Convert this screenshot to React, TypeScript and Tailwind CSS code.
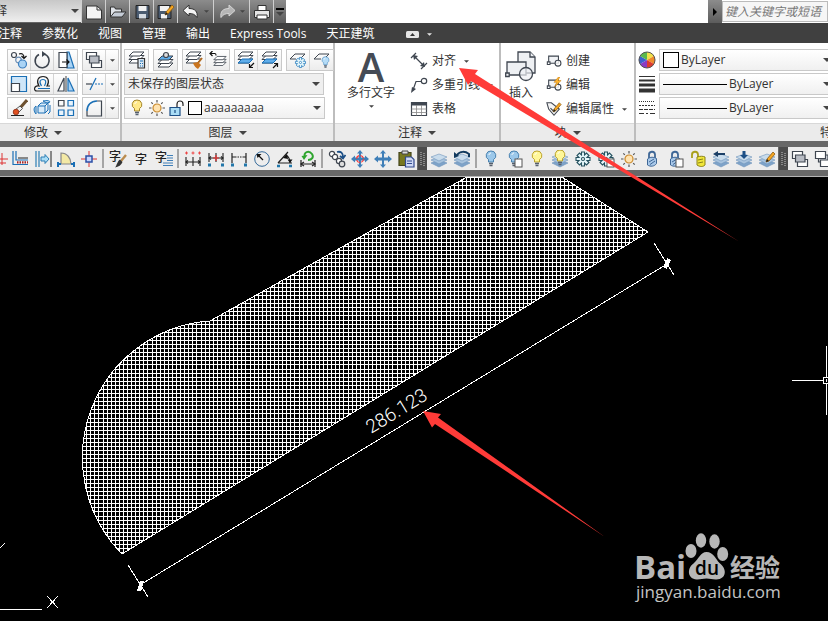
import React, { useState } from "react";

const DARK = "#3f4650";
const BLUE = "#1a6fb5";
const SKY = "#a9d3f5";

type IconProps = { children: React.ReactNode; size?: string };

const Icon = ({ children, size = "w-[18px] h-[18px]" }: IconProps) => (
  <svg
    viewBox="0 0 18 18"
    className={`${size} shrink-0`}
    fill="none"
    stroke={DARK}
    strokeWidth="1.2"
    aria-hidden="true"
  >
    {children}
  </svg>
);

const Caret = ({ small = false, light = false }) => (
  <svg
    viewBox="0 0 8 4"
    className={small ? "w-[5px] h-[3px] shrink-0" : "w-2 h-1 shrink-0"}
    aria-hidden="true"
  >
    <path d="M0 0h8L4 4z" fill={light ? "#e5e5e5" : "#444"} />
  </svg>
);

/* ---------- shared icon parts ---------- */

const Layers = ({ top = "#fff", y = 0 }) => (
  <g transform={`translate(0 ${y})`} strokeWidth="1">
    <path d="M1 14l4-4h11l-4 4z" fill="#fff" />
    <path d="M1 10.500l4-4h11l-4 4z" fill="#fff" />
    <path d="M1 7l4-4h11l-4 4z" fill={top} />
  </g>
);

const Stack = () => (
  <g strokeWidth=".6" stroke="#6f93ba">
    <path d="M1 13l8-3 8 3-8 4z" fill="#7ea3c9" />
    <path d="M1 10l8-3 8 3-8 4z" fill="#a9c4de" />
    <path d="M1 7l8-3 8 3-8 4z" fill="#c9dcec" />
  </g>
);

const Bulb = ({ fill = "#ffe98a", stroke = "#9a7a1e" }) => (
  <g>
    <path d="M9 1a4.600 4.600 0 0 0-2.500 8.600V12h5V9.600A4.600 4.600 0 0 0 9 1z" fill={fill} stroke={stroke} strokeWidth=".9" />
    <path d="M7 13.500h4M7.500 15.500h3" stroke="#56606e" strokeWidth="1.500" />
    <path d="M7 5c0-1 1-2 2-2" stroke="#fff" strokeWidth="1" />
  </g>
);

const Sun = () => (
  <g stroke="#555" strokeWidth="1.200">
    <circle cx="9" cy="9" r="4" fill="#ffe3b0" stroke="#c98a2e" />
    <path d="M9 1v2.500M9 14.500V17M1 9h2.500M14.500 9H17M3.300 3.300l1.500 1.500M13.200 13.200l1.500 1.500M3.300 14.700l1.500-1.500M13.200 4.800l1.500-1.500" />
  </g>
);

const Flake = ({ color = "#2b7fc0" }) => (
  <g stroke={color} strokeWidth="1.100" fill="#e6f7fb">
    <path d="M7.500 2h3v3l2-2 2.500 2.500-2 2h3v3h-3l2 2-2.500 2.500-2-2v3h-3v-3l-2 2L3 12.500l2-2H2v-3h3l-2-2L5.500 3l2 2z" />
    <circle cx="9" cy="9" r="1.500" fill="#fff" />
  </g>
);

const Lock = () => (
  <g stroke="#3f6796" strokeWidth="1">
    <path d="M6 9V5a3 3 0 0 1 6-.5V9" strokeWidth="1.800" />
    <path d="M4.500 9c3-2.500 6-2 9-.5v5c-2 3-6 3.500-9 1.500z" fill="#a9c9ea" />
    <path d="M6 12l5-3M7 14.500l5-3.500" stroke="#3f6796" />
  </g>
);

const Shadow = ({ x = 10, y = 9 }) => (
  <rect x={x} y={y} width="7" height="8" fill="#fff" stroke="#555" strokeWidth="1" />
);

const Pencil = () => (
  <g strokeWidth=".8">
    <path d="M8 12l1-3 6-7 2 2-6 7z" fill="#f5a623" stroke="#8a5a10" />
    <path d="M8 12l1-3 2 2z" fill="#222" stroke="none" />
  </g>
);

const Brush = () => (
  <g>
    <path d="M17 5l-5 6" stroke="#b98b4e" strokeWidth="2.400" />
    <path d="M11 9.500l2.500 2.500c-1 3-4 5-7.500 5.500 2-2 2-6 5-8z" fill="#333" stroke="none" />
  </g>
);

const Spans = ({ y = 11 }) => (
  <g stroke="#222" strokeWidth="1.100">
    <path d={`M2 ${y - 5}v9M9 ${y - 5}v9M16 ${y - 5}v9M2 ${y}h14`} />
    <path d={`M4 ${y - 1.5}L2 ${y}l2 1.500M14 ${y - 1.5}l2 1.500-2 1.500`} />
  </g>
);

const BlockShape = () => (
  <g strokeWidth="1.200">
    <path d="M3 3.500h11v8H3z" fill="#f1f3f6" />
    <circle cx="13.500" cy="11.500" r="3.300" fill="#fff" fillOpacity=".8" />
    <path d="M1.500 10h3v3h-3z" fill="#fff" />
  </g>
);

const Compass = ({ accent = "" }) => (
  <g fill="#3f7fb8" stroke="none">
    <path d="M9 0l3 3.500h-2v4h4V5.500L18 9l-4 3.500v-2h-4v4h2L9 18l-3-3.500h2v-4H4v2L0 9l4-3.500v2h4v-4H6z" />
    {accent && <circle cx="9" cy="9" r="3.500" fill="none" stroke={accent} strokeWidth="1.200" strokeDasharray="4 1.500" />}
  </g>
);

const Glyph = ({ x = 9, y = 14 }) => (
  <text
    x={x}
    y={y}
    textAnchor="middle"
    fontSize="12"
    fontWeight="500"
    fill="#222"
    stroke="none"
    fontFamily="'Noto Sans CJK SC', sans-serif"
  >
    字
  </text>
);

/* ---------- ribbon building blocks ---------- */

type Tool = { label: string; icon: React.ReactNode };

const toolBox = "flex h-[22px] border border-[#c9c9c9] bg-linear-to-b from-white to-[#ececec]";

const ToolGroup = ({ tools, drop = false }: { tools: Tool[]; drop?: boolean }) => (
  <div className={toolBox}>
    {tools.map((t) => (
      <button
        key={t.label}
        aria-label={t.label}
        className="flex w-[23px] items-center justify-center border-r border-[#d4d4d4] last:border-r-0"
      >
        {t.icon}
      </button>
    ))}
    {drop && (
      <button aria-label="更多" className="flex w-3 items-center justify-center">
        <Caret small />
      </button>
    )}
  </div>
);

type PanelProps = {
  title: string;
  className: string;
  footer?: string;
  children: React.ReactNode;
};

const Panel = ({ title, className, footer = "justify-center", children }: PanelProps) => (
  <section className={`flex shrink-0 flex-col border-r-2 border-[#bdbdbd] ${className}`}>
    <div className="flex-1 pt-1.5">{children}</div>
    <button
      className={`flex h-[18px] items-center gap-1.5 border-t border-[#d8d8d8] bg-[#ebebeb] ${footer}`}
    >
      {title}
      <Caret />
    </button>
  </section>
);

type DropProps = {
  label: string;
  value: string;
  width: string;
  lead?: React.ReactNode;
  bg?: string;
};

const Drop = ({ label, value, width, lead, bg = "bg-linear-to-b from-white to-[#f0f0f0]" }: DropProps) => (
  <div className={`flex h-[22px] items-center gap-0.5 border border-[#c9c9c9] px-[3px] ${width} ${bg}`}>
    {lead}
    <select aria-label={label} className="min-w-0 flex-1 appearance-none bg-transparent outline-none">
      <option>{value}</option>
    </select>
    <Caret />
  </div>
);

const Row = ({ icon, text, drop = false }: { icon: React.ReactNode; text: string; drop?: boolean }) => (
  <button className="flex h-6 items-center gap-1 whitespace-nowrap">
    {icon}
    {text}
    {drop && (
      <span className="pl-1">
        <Caret small />
      </span>
    )}
  </button>
);

/* ---------- ribbon data ---------- */

const modifyRows: Tool[][] = [
  [
    {
      label: "复制",
      icon: (
        <Icon>
          <circle cx="4" cy="4" r="2.500" />
          <circle cx="8.500" cy="9" r="2.800" stroke="#6d8fb5" />
          <circle cx="12.500" cy="13" r="4" fill={SKY} stroke="#3d7fbf" />
          <path d="M9 3c3-1 5 0 5 4M11.500 5l2.500 2.500L16.500 5" stroke="#111" />
        </Icon>
      ),
    },
    {
      label: "旋转",
      icon: (
        <Icon>
          <path d="M6 3.500A7 7 0 1 0 11 3" strokeWidth="1.600" />
          <path d="M9 0l4 3-4 3z" fill={DARK} stroke="none" />
        </Icon>
      ),
    },
    {
      label: "拉伸",
      icon: (
        <Icon>
          <path d="M10 1h2l5 16h-7z" fill={SKY} stroke={BLUE} />
          <path d="M2 1.500h8v15H2z" fill="#fff" />
          <path d="M5 11h7M9.500 8.500L12 11l-2.500 2.500" stroke="#111" />
        </Icon>
      ),
    },
  ],
  [
    {
      label: "缩放",
      icon: (
        <Icon>
          <path d="M1.500 1.500h15v15h-15z" fill="#cfe6f8" stroke={BLUE} />
          <path d="M1.500 8.500h8v8h-8z" fill="#fff" />
        </Icon>
      ),
    },
    {
      label: "偏移",
      icon: (
        <Icon>
          <path d="M17 11h-3c3-5 1-9.500-4-9.500S3 6 6 11c-5-1-6 5-2 5h13" stroke="#222" />
          <path d="M17 13.500H5M8.500 11c-3-5-1-6.500 1.500-6.500s4 2 1.500 6.500" stroke={BLUE} />
        </Icon>
      ),
    },
    {
      label: "镜像",
      icon: (
        <Icon>
          <path d="M7 3v13H1z" fill="#fff" />
          <path d="M11 3v13h6z" fill={SKY} stroke={BLUE} />
          <path d="M9 1v16" stroke="#444" strokeWidth="1" />
        </Icon>
      ),
    },
  ],
  [
    {
      label: "删除",
      icon: (
        <Icon>
          <path d="M17 1l-7 8" stroke="#6d5130" strokeWidth="3" />
          <path d="M10 7l2.500 2.500-4 4-3-3z" fill="#eee" stroke="#333" strokeWidth=".8" />
          <circle cx="6" cy="13" r="2.800" fill="#e05020" stroke="#8a2a10" strokeWidth=".8" />
          <path d="M1 16.500h13" stroke="#222" strokeWidth="1" />
        </Icon>
      ),
    },
    {
      label: "分解",
      icon: (
        <Icon>
          <g stroke={BLUE} strokeWidth="1" fill="#d9ebf9">
            <path d="M5 7h7v7H5zM5 7l3-3h7l-3 3M12 14l3-3V4" />
            <path d="M3 7c-3 2-2 6 0 8V7zM10 2c4-1 7 0 7 1l-3 1zM17 6v7l-2 2" />
          </g>
        </Icon>
      ),
    },
    {
      label: "阵列",
      icon: (
        <Icon>
          <path d="M1.500 1.500H7V7H1.500z" />
          <path d="M11 1.500h5.500V7H11zM1.500 11H7v5.500H1.500zM11 11h5.500v5.500H11z" stroke={BLUE} fill="#eaf4fc" />
        </Icon>
      ),
    },
  ],
];

const modifyDrops: Tool[] = [
  {
    label: "前置",
    icon: (
      <Icon>
        <path d="M1.500 1.500h10v7h-10z" fill="#fff" />
        <path d="M6.500 9.500h10v7h-10z" fill="#fff" />
        <path d="M4.500 5H14v7H4.500z" fill="#b8bcc4" />
      </Icon>
    ),
  },
  {
    label: "修剪",
    icon: (
      <Icon>
        <path d="M1 9h6" stroke={DARK} />
        <path d="M10 9h8" stroke={BLUE} strokeDasharray="2 1" />
        <path d="M5 15l6-12" stroke={BLUE} />
      </Icon>
    ),
  },
  {
    label: "圆角",
    icon: (
      <Icon>
        <path d="M2 12v5h14.500V2H12" />
        <path d="M2 12C2 6 6 2 12 2" stroke={BLUE} strokeWidth="1.600" />
      </Icon>
    ),
  },
];

const layerGroups: Tool[][] = [
  [
    {
      label: "图层特性",
      icon: (
        <Icon>
          <Layers y={-2} />
          <path d="M10 7.500h6.500V17H10z" fill="#dbe8f3" stroke="#333" />
          <path d="M12 10h3M12 12.500h1M14 12.500h1M12 15h1M14 15h1" stroke={BLUE} />
        </Icon>
      ),
    },
  ],
  [
    {
      label: "置为当前",
      icon: (
        <Icon>
          <Layers top="#5fadea" y={2} />
          <circle cx="9" cy="4" r="2.500" fill="#ddd" />
        </Icon>
      ),
    },
  ],
  [
    {
      label: "匹配",
      icon: (
        <Icon>
          <Layers y={-2} />
          <path d="M17 7l-4 5" stroke="#b06a20" strokeWidth="2" />
          <path d="M8 12l5-1 3 3-3 4c-2-1-4-3-5-6z" fill="#c9741e" stroke="none" />
        </Icon>
      ),
    },
    {
      label: "上一个",
      icon: (
        <Icon>
          <g transform="translate(4 3) scale(.82)">
            <Layers />
          </g>
          <path d="M1 2.500h5c1 0 1 1 1 2M3.500 0L1 2.500 3.500 5" stroke="#111" />
        </Icon>
      ),
    },
  ],
  [
    {
      label: "隔离",
      icon: (
        <Icon>
          <Layers y={-2} />
          <path d="M1 12l4-4h11l-4 4z" fill="#5fadea" stroke={BLUE} strokeWidth="1" />
          <path d="M17 12l-4 4M12.500 13v3.500H16" stroke="#111" />
        </Icon>
      ),
    },
    {
      label: "取消隔离",
      icon: (
        <Icon>
          <Layers y={-2} />
          <path d="M1 12l4-4h11l-4 4z" fill="#5fadea" stroke={BLUE} strokeWidth="1" />
          <path d="M12 17l4-4M13 12.500h3.500V16" stroke="#111" />
        </Icon>
      ),
    },
  ],
  [
    {
      label: "冻结",
      icon: (
        <Icon>
          <path d="M7 8H1l5-5h10l-4 4" strokeWidth="1" />
          <g transform="translate(5 5) scale(.72)">
            <Flake />
          </g>
        </Icon>
      ),
    },
    {
      label: "关闭",
      icon: (
        <Icon>
          <path d="M8 8H1l5-5h10l-4 4" strokeWidth="1" />
          <g transform="translate(6 5) scale(.72)">
            <Bulb fill="#b5dcf7" stroke="#4f8fc4" />
          </g>
        </Icon>
      ),
    },
  ],
];

/* ---------- tool strip data ---------- */

const stripA: Tool[][] = [
  [
    {
      label: "墙体",
      icon: (
        <Icon>
          <path d="M5 1v9h12M2 1v13.500h15" stroke={BLUE} />
          <path d="M7 8h10" stroke="#222" strokeWidth="1" />
          <path d="M6 12.300h11" stroke="#a22" strokeWidth="2.200" strokeDasharray="1.500 1" />
        </Icon>
      ),
    },
    {
      label: "偏移墙",
      icon: (
        <Icon>
          <path d="M2 1v16M5 1v16" stroke="#2d7fb5" />
          <path d="M7 7h4V4.500L15 9l-4 4.500V11H7z" fill="#a9dcf5" stroke="#2d7fb5" strokeWidth="1" />
          <path d="M17 1v16" stroke="#222" strokeWidth="1" />
        </Icon>
      ),
    },
    {
      label: "门窗",
      icon: (
        <Icon>
          <path d="M4 14V3c6 0 10 5 10 11z" fill="#f3e9a5" stroke="#888" />
          <path d="M1 12v5M1 14h3M17 12v5M14 14h3" stroke={BLUE} strokeWidth="2" />
        </Icon>
      ),
    },
    {
      label: "柱子",
      icon: (
        <Icon>
          <path d="M9 1v16M1 9h16" stroke="#d33" strokeWidth="1" />
          <path d="M6 6h6v6H6z" fill="#c9d6ff" stroke="#2b4fa5" strokeWidth="1.500" />
        </Icon>
      ),
    },
  ],
  [
    { label: "文字样式", icon: <Icon><Glyph x={6} y={11} /><Brush /></Icon> },
    { label: "单行文字", icon: <Icon><Glyph /></Icon> },
    {
      label: "多行文字",
      icon: (
        <Icon>
          <Glyph x={6} y={12} />
          <path d="M12 5.500h6M12 8h6M12 10.500h6M8 13h10M8 15.500h10" stroke="#3f7fb8" strokeWidth="1" />
        </Icon>
      ),
    },
  ],
  [
    {
      label: "逐点标注",
      icon: (
        <Icon>
          <Spans y={12} />
          <path d="M1 3h3M7.500 3h3M14 3h3M2.500 1.500v3M9 1.500v3M15.500 1.500v3" stroke="#e44" strokeWidth="1" />
        </Icon>
      ),
    },
    {
      label: "连续标注",
      icon: (
        <Icon>
          <Spans y={8} />
          <path d="M6 8h6M9 5v6" stroke="#e33" />
          <path d="M1 15h3M14 15h3" stroke="#27a" strokeWidth="3" />
        </Icon>
      ),
    },
    {
      label: "快速标注",
      icon: (
        <Icon>
          <path d="M2 3v10M16 3v10M2 7h3M13 7h3" stroke="#222" />
          <path d="M5 7h8" stroke="#222" strokeDasharray="1.500 1" />
          <path d="M1 15h3M14 15h3" stroke="#27a" strokeWidth="3" />
        </Icon>
      ),
    },
    {
      label: "半径标注",
      icon: (
        <Icon>
          <circle cx="9" cy="9" r="7.300" stroke="#356a9a" strokeWidth="1" />
          <path d="M10 10L5 5" stroke="#111" />
          <path d="M3.500 4h5l-4 4z" fill="#111" stroke="none" />
        </Icon>
      ),
    },
    {
      label: "角度标注",
      icon: (
        <Icon>
          <path d="M2 13L12 2M2 13h14M10 5c3 2 4 5 4 8" stroke="#222" />
          <path d="M1 16h3M13 16h3" stroke="#27a" strokeWidth="2.500" />
          <path d="M11.500 9.500h5L14 13zM7 8l4-4 1 5z" fill="#111" stroke="none" />
        </Icon>
      ),
    },
    {
      label: "更新标注",
      icon: (
        <Icon>
          <path d="M6 7C4 2 10 0 13 4c2 3 0 6-4 6" stroke="#2fa52f" strokeWidth="2" />
          <path d="M2.500 6l6-1L5 10z" fill="#2fa52f" stroke="none" />
          <path d="M2 10v7M16 10v7M2 14h14" stroke="#222" />
          <path d="M5 12l-3 2 3 2M13 12l3 2-3 2" stroke="#222" />
        </Icon>
      ),
    },
  ],
  [
    {
      label: "拷贝",
      icon: (
        <Icon>
          <circle cx="4" cy="4" r="2.600" fill="#fff" />
          <circle cx="7" cy="7" r="2.600" fill="#fff" />
          <circle cx="11" cy="11" r="2.600" fill="#fff" />
          <circle cx="14" cy="14" r="2.800" fill="#ddd" />
          <path d="M9 2c4-1 6 1 6 5M12 6l3 2.500L17.500 5" stroke="#1c4f86" strokeWidth="1.800" />
        </Icon>
      ),
    },
    { label: "移位", icon: <Icon><Compass accent="#f33" /></Icon> },
    { label: "移动", icon: <Icon><Compass /></Icon> },
    {
      label: "粘贴",
      icon: (
        <Icon>
          <path d="M2 2.500h12v13H2z" fill="#77771e" stroke="#44441a" />
          <path d="M5 1h6v3H5z" fill="#ddd" stroke="#444" strokeWidth="1" />
          <path d="M8.500 7h6l2.500 2.500V17H8.500z" fill="#cfd9f5" stroke="#334a8f" />
          <path d="M10 11h5M10 13.500h5" stroke="#334a8f" strokeWidth="1" />
        </Icon>
      ),
    },
  ],
];

const stripB: Tool[][] = [
  [
    { label: "图层", icon: <Icon><Stack /></Icon> },
    {
      label: "图层转换",
      icon: (
        <Icon>
          <Stack />
          <path d="M4 5c3-4 8-4 12-1v3" stroke="#123a5e" strokeWidth="2" />
          <path d="M1 2v6l5-2z" fill="#123a5e" stroke="none" />
        </Icon>
      ),
    },
  ],
  [
    { label: "关闭图层", icon: <Icon><Bulb fill="#9cc8ea" stroke="#3d78a8" /></Icon> },
    { label: "关闭其他", icon: <Icon><Bulb fill="#9cc8ea" stroke="#3d78a8" /><Shadow /></Icon> },
    { label: "打开图层", icon: <Icon><Bulb fill="#fff79a" stroke="#b59a1e" /></Icon> },
    { label: "打开全部", icon: <Icon><Stack /><g transform="translate(0 -1)"><Bulb fill="#fff79a" stroke="#b59a1e" /></g></Icon> },
    { label: "冻结图层", icon: <Icon><Flake color="#24505e" /></Icon> },
    { label: "冻结其他", icon: <Icon><Flake color="#24505e" /><Shadow /></Icon> },
    { label: "解冻图层", icon: <Icon><Sun /></Icon> },
    { label: "锁定图层", icon: <Icon><Lock /></Icon> },
    { label: "锁定其他", icon: <Icon><Lock /><Shadow /></Icon> },
    {
      label: "解锁图层",
      icon: (
        <Icon>
          <path d="M3 8V5a3 3 0 0 1 6-.5V8" stroke="#a8a01c" strokeWidth="1.800" />
          <path d="M8 7c3-1 6-1 8 0v8c-2 2-5 2-8 0z" fill="#f0e63a" stroke="#8a821a" strokeWidth="1" />
          <path d="M9 10l5-1M9 13l5-1" stroke="#8a821a" strokeWidth="1" />
        </Icon>
      ),
    },
    { label: "图层恢复", icon: <Icon><Stack /><path d="M1 4l5-3v2h7v2H6v2z" fill="#1c3f66" stroke="none" /></Icon> },
    { label: "图层合并", icon: <Icon><Stack /><path d="M9 9L5 5h2.500V1h3v4H13z" fill="#1c4f86" stroke="none" /></Icon> },
    { label: "图层编辑", icon: <Icon><Stack /><Pencil /></Icon> },
  ],
];

const stripC: Tool[][] = [
  [
    { label: "前置对象", icon: modifyDrops[0].icon },
    {
      label: "后置对象",
      icon: (
        <Icon>
          <path d="M4.500 5H14v7H4.500z" fill="#d5d8dd" />
          <path d="M1.500 1.500h10v7h-10zM6.500 10h10v6.500h-10z" fill="#fff" />
        </Icon>
      ),
    },
  ],
];

const Grip = () => (
  <div className="flex w-[9px] shrink-0 items-center justify-center bg-[#4c4c4c]">
    <svg viewBox="0 0 5 14" className="h-3.5 w-[5px]" aria-hidden="true">
      <path d="M1 0v14M4 1v13" stroke="#c8c8c8" strokeDasharray="1 1" />
    </svg>
  </div>
);

const Strip = ({ groups, children }: { groups: Tool[][]; children?: React.ReactNode }) => (
  <div className="flex h-[23px] shrink-0 bg-[#ededed]">
    {children}
    {groups.map((group, i) => (
      <React.Fragment key={i}>
        {i > 0 && <div className="mx-0.5 my-0.5 w-0.5 shrink-0 bg-[#a5a5a5]" />}
        {group.map((t) => (
          <button key={t.label} aria-label={t.label} className="flex w-[23px] shrink-0 items-center justify-center">
            {t.icon}
          </button>
        ))}
      </React.Fragment>
    ))}
  </div>
);

/* ---------- quick access bar ---------- */

const quick: (Tool & { drop?: boolean })[] = [
  { label: "新建", icon: <Icon><path d="M1.500 3H12l4.500 4v9h-15z" fill="#f4f4f4" stroke="#333" strokeWidth="1" /><path d="M12 3v4h4.500" stroke="#333" strokeWidth="1" /></Icon> },
  { label: "打开", icon: <Icon><path d="M1.500 14V4h4l1 2h6v3" fill="#dfe3e8" stroke="#333" strokeWidth="1" /><path d="M1.500 14l4-5H17l-4 5z" fill="#c5ccd6" stroke="#333" strokeWidth="1" /></Icon> },
  { label: "保存", icon: <Icon><path d="M3 2.500h13v13H3z" fill="#4a5b70" stroke="#222" strokeWidth="1" /><path d="M5.500 3h8v5h-8z" fill="#f2f2f2" stroke="none" /><path d="M6 11h7v4.500H6z" fill="#d5dbe2" stroke="none" /></Icon> },
  { label: "另存为", icon: <Icon><path d="M1 2.500h13v13H1z" fill="#4a5b70" stroke="#222" strokeWidth="1" /><path d="M3 3h9v5H3zM4 11h6v4.500H4z" fill="#f2f2f2" stroke="none" /><Pencil /></Icon> },
  { label: "放弃", drop: true, icon: <Icon><path d="M1 7.500L7 2v3.500c6 0 9 3 8 9-2-3-4-4-8-4V13z" fill="#f4f4f4" stroke="#333" strokeWidth="1" /></Icon> },
  { label: "重做", drop: true, icon: <Icon><path d="M17 7.500L11 2v3.500c-6 0-9 3-8 9 2-3 4-4 8-4V13z" fill="#b5b5b5" stroke="#d5d5d5" strokeWidth="1" /></Icon> },
  { label: "打印", icon: <Icon><path d="M5 2.500h8V8H5z" fill="#fff" stroke="#333" strokeWidth="1" /><path d="M1.500 7.500h15v7h-15z" fill="#e4e4e4" stroke="#333" strokeWidth="1" /><path d="M4 12h10v4H4z" fill="#fff" stroke="#333" strokeWidth="1" /></Icon> },
];

const tabs = ["注释", "参数化", "视图", "管理", "输出", "Express Tools", "天正建筑"];

const darkButton = "flex shrink-0 items-center justify-center bg-linear-to-b from-[#8c8c8c] to-[#5c5c5c]";

/* ---------- drawing area ---------- */

const OUTLINE = "M467 177L210 321A137 137 0 0 0 122 554L648 232L562 177";

// The hatch steps by 4px, with one wider step of 5px in every 49px.
const hatchSteps = (from: number, to: number, phase: number) => {
  const steps: number[] = [];
  for (let v = from; v < to; v++) {
    const k = (((v - phase) % 49) + 49) % 49;
    if (k % 4 === 0 && k < 48) steps.push(v);
  }
  return steps;
};

const Drawing = () => (
  <svg
    viewBox="0 177 828 444"
    preserveAspectRatio="xMinYMin slice"
    className="absolute inset-0 h-full w-full"
    fill="none"
    stroke="#fff"
    shapeRendering="crispEdges"
  >
    <clipPath id="slab">
      <path d={OUTLINE + "z"} />
    </clipPath>
    <g clipPath="url(#slab)">
      {hatchSteps(80, 650, 201).map((x) => (
        <path key={x} d={`M${x + 0.5} 177v380`} />
      ))}
      {hatchSteps(177, 560, 467).map((y) => (
        <path key={y} d={`M80 ${y + 0.5}h570`} />
      ))}
    </g>
    <path d={OUTLINE} />
    <path d="M140 585L667 264M128 565l20 32M654 243l20 32" />
    <path d="M139 591l3-10M665 268l4-9" strokeWidth="4" />
    <text
      x="371"
      y="434"
      transform="rotate(-31.400 371 434)"
      fill="#fff"
      stroke="none"
      fontFamily="Roboto, sans-serif"
      fontWeight="300"
      fontSize="19"
    >
      286.123
    </text>
    <path d="M0 609.500h42M47 596l11 12M58 596l-11 12M0 548l5-5" />
    <path d="M792 380.500h31M826.500 346v31M826.500 384v31M823.500 377.500h7v6h-7zM826.500 379v3" />
    <g fill="#b7b7b7" stroke="none" shapeRendering="auto">
      <text x="634" y="579" fontFamily="'Open Sans', sans-serif" fontWeight="700" fontSize="33">
        Bai
      </text>
      <ellipse cx="691" cy="551" rx="5.500" ry="7" />
      <ellipse cx="701" cy="540.500" rx="5.200" ry="7.200" />
      <ellipse cx="714.500" cy="541.500" rx="5.200" ry="7.200" />
      <ellipse cx="722.700" cy="554" rx="5.500" ry="7" />
      <path d="M706.500 552c7 0 9 7 13 11 8 6 7 16-3 16.500-4 .2-6-1-10-1s-6 1.200-10 1c-9-.5-10-11-3-16 5-4 7-11.500 13-11.500z" />
      <text x="707" y="575" textAnchor="middle" fill="#000" fontFamily="'Open Sans', sans-serif" fontWeight="600" fontSize="19">
        du
      </text>
      <text x="730" y="577" fontFamily="'Noto Sans CJK SC', sans-serif" fontWeight="700" fontSize="25">
        经验
      </text>
      <text x="636" y="598" fill="#c4c4c4" fontFamily="'Open Sans', sans-serif" fontWeight="500" fontSize="17">
        jingyan.baidu.com
      </text>
    </g>
  </svg>
);

const App = () => {
  const [query, setQuery] = useState("");

  return (
    <div className="relative flex min-h-screen flex-col overflow-hidden bg-black font-['Open_Sans','Noto_Sans_CJK_SC',sans-serif] text-xs leading-4 text-[#333]">
      {/* title bar */}
      <header className="flex h-[23px] bg-white">
        <div className="flex w-[81px] shrink-0 items-center overflow-hidden border-b border-[#666] bg-linear-to-b from-[#c8c8c8] to-[#efefef] pr-0.5">
          <select aria-label="工作空间" className="-ml-[17px] flex-1 appearance-none bg-transparent">
            <option>注释</option>
          </select>
          <Caret />
        </div>
        <div className="flex gap-px bg-[#cfcfcf] pl-px">
          {quick.map((t) => (
            <button key={t.label} aria-label={t.label} className={`${darkButton} min-w-[23px] ${t.drop ? "gap-1 px-1" : ""}`}>
              {t.icon}
              {t.drop && <Caret small />}
            </button>
          ))}
          <button aria-label="自定义" className={`${darkButton} w-3 flex-col gap-0.5`}>
            <span className="h-0.5 w-2 bg-black" />
            <Caret />
          </button>
        </div>
        <div className="ml-auto flex w-[120px] shrink-0">
          <button aria-label="展开" className={`${darkButton} w-3.5`}>
            <svg viewBox="0 0 4 8" className="h-2 w-1" aria-hidden="true">
              <path d="M0 0l4 4-4 4z" fill="#000" />
            </svg>
          </button>
          <input
            aria-label="搜索"
            value={query}
            onChange={(e) => setQuery(e.target.value)}
            placeholder="键入关键字或短语"
            className="my-px min-w-0 flex-1 border border-[#bbb] bg-[#f6f6f6] pl-0.5 italic placeholder:text-[#777]"
          />
        </div>
      </header>

      {/* ribbon tabs */}
      <nav className="flex h-5 items-center gap-5 bg-[#404040] pt-0.5 whitespace-nowrap text-white">
        {tabs.map((tab) => (
          <button key={tab} className="first:-ml-0.5">
            {tab}
          </button>
        ))}
        <button aria-label="最小化" className="ml-3 flex items-center gap-2">
          <svg viewBox="0 0 13 7" className="h-[7px] w-[13px]" aria-hidden="true">
            <rect width="13" height="7" rx="1.500" fill="#e5e5e5" />
            <path d="M4 5l2.500-3L9 5z" fill="#333" />
          </svg>
          <Caret small light />
        </button>
      </nav>

      {/* ribbon */}
      <div className="flex h-[98px] overflow-hidden bg-white">
        <Panel title="修改" className="w-[122px]" footer="pl-6">
          <div className="flex flex-col gap-0.5 pl-[7px]">
            {modifyRows.map((row, i) => (
              <div key={i} className="flex gap-1">
                <ToolGroup tools={row} />
                <ToolGroup tools={[modifyDrops[i]]} drop />
              </div>
            ))}
          </div>
        </Panel>

        <Panel title="图层" className="w-[213px]">
          <div className="flex flex-col gap-0.5 pl-0.5">
            <div className="flex gap-1">
              {layerGroups.map((g, i) => (
                <ToolGroup key={i} tools={g} />
              ))}
            </div>
            <Drop label="图层状态" value="未保存的图层状态" width="w-[200px]" bg="bg-[#efefef]" />
            <Drop
              label="图层"
              value="aaaaaaaaa"
              width="w-[201px]"
              lead={
                <>
                  <Icon><Bulb /></Icon>
                  <Icon><Sun /></Icon>
                  <Icon>
                    <path d="M9 8V5a3 3 0 0 1 6 0v2" stroke="#222" />
                    <path d="M2 8.500h10v8H2z" fill="#a9dcf5" stroke="#1c4f86" />
                    <path d="M7 11v3" stroke="#1c4f86" />
                  </Icon>
                  <span className="h-3.5 w-3.5 shrink-0 border border-black bg-white" />
                </>
              }
            />
          </div>
        </Panel>

        <Panel title="注释" className="w-[166px]">
          <div className="flex gap-[15px] pl-3">
            <button className="flex w-12 shrink-0 flex-col items-center whitespace-nowrap">
              <span className="text-[40px] leading-9 font-semibold text-[#454b55]">A</span>
              多行文字
              <span className="pt-1">
                <Caret small />
              </span>
            </button>
            <div className="flex flex-col">
              <Row
                text="对齐"
                drop
                icon={
                  <Icon>
                    <path d="M4 4l10 10M1 6l5-5M11 17l6-6" />
                    <path d="M3 3l5 1-4 4zM15 15l-5-1 4-4z" fill={DARK} stroke="none" />
                  </Icon>
                }
              />
              <Row
                text="多重引线"
                drop
                icon={
                  <Icon>
                    <path d="M3 14l3-8.500h5" />
                    <circle cx="14" cy="5" r="2.700" />
                    <path d="M1 17l1-6 4 2z" fill={DARK} stroke="none" />
                  </Icon>
                }
              />
              <Row
                text="表格"
                icon={
                  <Icon>
                    <path d="M1.500 2.500h15v13h-15z" fill="#fff" />
                    <path d="M1.500 4h15" strokeWidth="3" />
                    <path d="M1.500 9h15M1.500 12.500h15M6.500 5v10.500M11.500 5v10.500" strokeWidth=".8" stroke="#888" />
                  </Icon>
                }
              />
            </div>
          </div>
        </Panel>

        <Panel title="块" className="w-[135px]">
          <div className="flex gap-[9px] pl-1">
            <button className="flex w-8 shrink-0 flex-col items-center gap-0.5 pt-0.5">
              <svg viewBox="0 0 32 32" className="h-8 w-8" fill="#eef0f3" stroke={DARK} strokeWidth="1.300" aria-hidden="true">
                <path d="M13 1h12l5 5v16H13z" />
                <path d="M25 1v5h5" />
                <path d="M2 11h19v13H2z" />
                <circle cx="21" cy="23" r="6.500" fillOpacity=".7" />
                <path d="M.7 22h3.500v3.500H.7z" />
              </svg>
              插入
            </button>
            <div className="flex flex-col">
              <Row text="创建" icon={<Icon size="h-4 w-4"><BlockShape /></Icon>} />
              <Row
                text="编辑"
                icon={
                  <Icon size="h-4 w-4">
                    <BlockShape />
                    <path d="M14 0L9 6h3l-2 5 7-7h-3.500l2-4z" fill="#ffb62e" stroke="#c97a10" strokeWidth=".6" />
                  </Icon>
                }
              />
              <Row
                text="编辑属性"
                drop
                icon={
                  <Icon size="h-4 w-4">
                    <path d="M1 2h5l9 7-6 7-6-7z" fill="#f4f4f4" />
                    <path d="M5 8l4 4 5-6" />
                    <Pencil />
                  </Icon>
                }
              />
            </div>
          </div>
        </Panel>

        <Panel title="特性" className="w-[408px]">
          <div className="flex flex-col gap-0.5 pl-0.5">
            <div className="flex items-center gap-[3px]">
              <svg viewBox="0 0 18 18" className="h-[18px] w-[18px]" aria-hidden="true">
                <path d="M9 9V1a8 8 0 0 1 7 4z" fill="#f2e24a" />
                <path d="M9 9l7-4a8 8 0 0 1 0 8z" fill="#ef8a2c" />
                <path d="M9 9l7 4a8 8 0 0 1-7 4z" fill="#dd3b30" />
                <path d="M9 9v8a8 8 0 0 1-7-4z" fill="#8a3cc4" />
                <path d="M9 9l-7 4a8 8 0 0 1 0-8z" fill="#3c62cf" />
                <path d="M9 9L2 5a8 8 0 0 1 7-4z" fill="#5cb84c" />
                <circle cx="9" cy="9" r="8" fill="none" stroke="#555" />
              </svg>
              <Drop label="颜色" value="ByLayer" width="w-[176px]" lead={<span className="h-4 w-4 shrink-0 border border-black bg-white" />} />
            </div>
            <div className="flex items-center gap-[3px]">
              <svg viewBox="0 0 18 18" className="h-[18px] w-[18px]" stroke="#333" aria-hidden="true">
                <path d="M1 1.500h16" />
                <path d="M1 5.500h16" strokeWidth="2" />
                <path d="M1 10h16" strokeWidth="3" />
                <path d="M1 15.500h16" strokeWidth="4" />
              </svg>
              <Drop label="线宽" value="ByLayer" width="w-[176px]" lead={<span className="h-px w-16 shrink-0 bg-black" />} />
            </div>
            <div className="flex items-center gap-[3px]">
              <svg viewBox="0 0 18 18" className="h-[18px] w-[18px]" stroke="#333" aria-hidden="true">
                <path d="M1 2.500h16" strokeDasharray="1 1" />
                <path d="M1 6.500h16" strokeDasharray="2 1" />
                <path d="M1 10.500h16" strokeDasharray="4 1" />
                <path d="M1 14.500h16" strokeDasharray="5 2 2 2" />
              </svg>
              <Drop label="线型" value="ByLayer" width="w-[176px]" lead={<span className="ml-1 h-px w-[60px] shrink-0 bg-black" />} />
            </div>
          </div>
        </Panel>
      </div>

      {/* tool strips */}
      <div className="flex h-9 gap-px overflow-hidden border-b border-[#b5b5b5] bg-[#686868] py-1.5">
        <Strip groups={stripA}>
          <button aria-label="轴网" className="flex w-2 shrink-0 items-center justify-end overflow-hidden">
            <Icon>
              <path d="M12 3v12M9 9h9M9 13h7" stroke="#d33" strokeWidth="1" />
            </Icon>
          </button>
        </Strip>
        <Strip groups={stripB}>
          <Grip />
        </Strip>
        <Strip groups={stripC}>
          <Grip />
        </Strip>
      </div>

      <main className="relative flex-1 bg-black">
        <Drawing />
      </main>

      {/* pointers over the ribbon and the drawing */}
      <svg
        viewBox="0 0 828 621"
        preserveAspectRatio="xMinYMin slice"
        className="pointer-events-none absolute inset-0 h-full w-full"
        fill="#ff3b38"
        aria-hidden="true"
      >
        <path d="M459 68l19 2-3 4 264 167.500L471 81l-3 4z" />
        <path d="M423 411l18 3-3 3.500 167 119.500L435 424l-3 3.500z" />
      </svg>
    </div>
  );
};

export default App;
